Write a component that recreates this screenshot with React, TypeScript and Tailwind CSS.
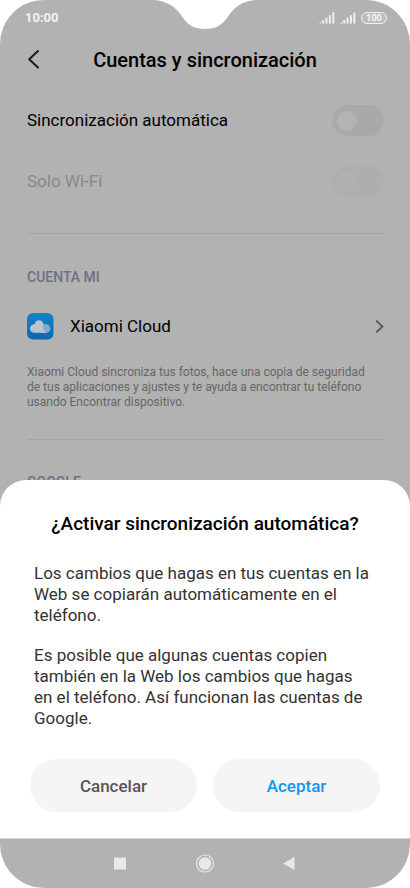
import { useState } from 'react';

export default function App() {
  const [autoSync, setAutoSync] = useState(false);

  return (
    <div className="min-h-screen bg-white font-[Roboto,sans-serif] text-black">
      <div className="relative flex min-h-screen flex-col overflow-hidden rounded-[44px] bg-[#b2b2b2]">
        <Notch />
        <StatusBar />
        <main className="relative flex-1">
          <header className="flex h-12 items-center px-6">
            <button type="button" aria-label="Atrás" className="flex h-8 w-5 items-center justify-center">
              <svg width="20" height="24" viewBox="0 0 20 24" fill="none" stroke="#1c1c1c" strokeWidth="2" strokeLinecap="round" strokeLinejoin="round">
                <path d="M14 3 5.200 11.300 14 19.600" />
              </svg>
            </button>
            <h1 className="flex-1 pr-5 text-center text-xl font-medium">Cuentas y sincronización</h1>
          </header>

          <div className="pt-1.5 pr-[26px] pl-[27px]">
            <Toggle id="auto" label="Sincronización automática" checked={autoSync} onChange={setAutoSync} />
            <Toggle id="wifi" label="Solo Wi-Fi" checked={false} disabled />
            <hr className="mt-[21px] border-[#a4a4a4]" />

            <h2 className="mt-[33px] text-sm leading-5 font-medium text-[#6f6f85]">CUENTA MI</h2>
            <a href="#cloud" className="mt-5 flex h-10 items-center">
              <CloudIcon />
              <span className="ml-4 flex-1 text-[17px]">Xiaomi Cloud</span>
              <svg width="9" height="16" viewBox="0 0 9 16" fill="none" stroke="#5c5c5c" strokeWidth="2">
                <path d="M1.200 1.600 7.400 7.500 1.200 13.400" />
              </svg>
            </a>
            <p className="mt-[18px] text-xs leading-[15px] text-[#666]">
              Xiaomi Cloud sincroniza tus fotos, hace una copia de seguridad
              <br />
              de tus aplicaciones y ajustes y te ayuda a encontrar tu teléfono
              <br />
              usando Encontrar dispositivo.
            </p>
            <hr className="mt-[29px] border-[#a4a4a4]" />
            <h2 className="mt-8 text-sm leading-5 font-medium text-[#6f6f85]">GOOGLE</h2>
          </div>

          <SyncDialog onAccept={() => setAutoSync(true)} />
        </main>
        <NavBar />
      </div>
    </div>
  );
}

function Notch() {
  return (
    <svg className="absolute top-0 left-1/2 -translate-x-1/2" width="110" height="30" viewBox="0 0 110 30" fill="#fff">
      <path d="M2 0C16 0 26 7 32 16.500C38 25.500 45 29 55 29C65 29 72 25.500 78 16.500C84 7 94 0 108 0Z" />
    </svg>
  );
}

function StatusBar() {
  return (
    <div className="flex h-9 items-center justify-between pr-[23px] pl-[25px]">
      <span className="text-[13px] leading-4 font-bold text-[#f2f2f2]">10:00</span>
      <div className="flex items-center gap-[5px]">
        <Signal />
        <Signal />
        <span className="flex h-3 w-[26px] items-center justify-center rounded-full border border-[#f0f0f0] bg-[#bebebe] text-[9px] leading-3 font-medium text-white">
          100
        </span>
      </div>
    </div>
  );
}

function Signal() {
  return (
    <svg width="16" height="12" viewBox="0 0 16 12" fill="#f0f0f0">
      <path d="M0 11.500 2.200 9.500V11.500Z" />
      <rect x="3.200" y="8" width="2" height="3.500" />
      <rect x="6.500" y="5.800" width="2" height="5.700" />
      <rect x="9.900" y="3.200" width="2" height="8.300" />
      <rect x="13.300" y="0.500" width="2" height="11" />
    </svg>
  );
}

type ToggleProps = {
  id: string;
  label: string;
  checked: boolean;
  disabled?: boolean;
  onChange?: (value: boolean) => void;
};

function Toggle({ id, label, checked, disabled, onChange }: ToggleProps) {
  return (
    <div className="flex h-[61px] items-center justify-between">
      <label htmlFor={id} className={disabled ? 'text-[17px] text-[#888]' : 'text-[17px]'}>
        {label}
      </label>
      <input
        id={id}
        type="checkbox"
        checked={checked}
        disabled={disabled}
        onChange={e => onChange?.(e.target.checked)}
        className="flex h-[31px] w-[52px] appearance-none items-center rounded-full bg-[#a9a9a9] px-[5px] before:h-5 before:w-5 before:rounded-full before:bg-[#b3b3b3] checked:justify-end checked:bg-[#0d84d8] disabled:bg-[#aeaeae] disabled:before:bg-[#b0b0b0]"
      />
    </div>
  );
}

function CloudIcon() {
  return (
    <svg width="27" height="28" viewBox="0 0 27 28">
      <defs>
        <linearGradient id="sky" x1="0" y1="0" x2="0" y2="1">
          <stop offset="0" stopColor="#1086c6" />
          <stop offset="1" stopColor="#0b69ae" />
        </linearGradient>
      </defs>
      <rect x="0" y="0" width="26.500" height="26.500" rx="6" fill="url(#sky)" />
      <path d="M15 11.500c5-1.500 8.400 1.200 8.400 4.300 0 2.300-1.800 4-4.200 4H13Z" fill="#7fabcd" />
      <path
        d="M7.500 19.800a4.300 4.300 0 0 1-.4-8.600c.5-.1.700-.4.800-.9a4.300 4.300 0 0 1 8.200-.1c.5 1.600-.4 3.200 0 5 .3 1.700 1.500 3.300 3.600 4.600Z"
        fill="#bcc4cb"
      />
    </svg>
  );
}

function SyncDialog({ onAccept }: { onAccept: () => void }) {
  return (
    <div
      role="dialog"
      aria-labelledby="dialog-title"
      className="absolute inset-x-0 bottom-0 rounded-t-[26px] bg-white px-[30px] pt-8 pb-[26px]"
    >
      <h2 id="dialog-title" className="text-center text-[19px] leading-6 font-medium">
        ¿Activar sincronización automática?
      </h2>
      <div className="mt-[27px] space-y-[19px] px-1 text-[17px] leading-[21px] text-[#333]">
        <p>Los cambios que hagas en tus cuentas en la Web se copiarán automáticamente en el teléfono.</p>
        <p>
          Es posible que algunas cuentas copien
          <br />
          también en la Web los cambios que hagas
          <br />
          en el teléfono. Así funcionan las cuentas de Google.
        </p>
      </div>
      <div className="mt-[30px] grid grid-cols-2 gap-4">
        <button type="button" className="h-[53px] rounded-full bg-[#f5f5f5] pt-0.5 text-[17px] font-medium text-[#555]">
          Cancelar
        </button>
        <button
          type="button"
          onClick={onAccept}
          className="h-[53px] rounded-full bg-[#f5f5f5] pt-0.5 text-[17px] font-medium text-[#0d96f6]"
        >
          Aceptar
        </button>
      </div>
    </div>
  );
}

function NavBar() {
  return (
    <nav className="flex h-[50px] items-center justify-center gap-[60px] border-t border-[#d4d4d4]">
      <button type="button" aria-label="Recientes">
        <svg width="24" height="24" viewBox="0 0 24 24">
          <rect x="5" y="5.500" width="12" height="12" fill="#e8e8e8" />
        </svg>
      </button>
      <button type="button" aria-label="Inicio">
        <svg width="24" height="24" viewBox="0 0 24 24">
          <circle cx="12" cy="11.500" r="8.500" fill="none" stroke="#e8e8e8" strokeWidth="1.200" />
          <circle cx="12" cy="11.500" r="6.300" fill="#e8e8e8" />
        </svg>
      </button>
      <button type="button" aria-label="Volver">
        <svg width="24" height="24" viewBox="0 0 24 24">
          <path d="M17.500 5v13L6 11.500Z" fill="#e8e8e8" />
        </svg>
      </button>
    </nav>
  );
}
